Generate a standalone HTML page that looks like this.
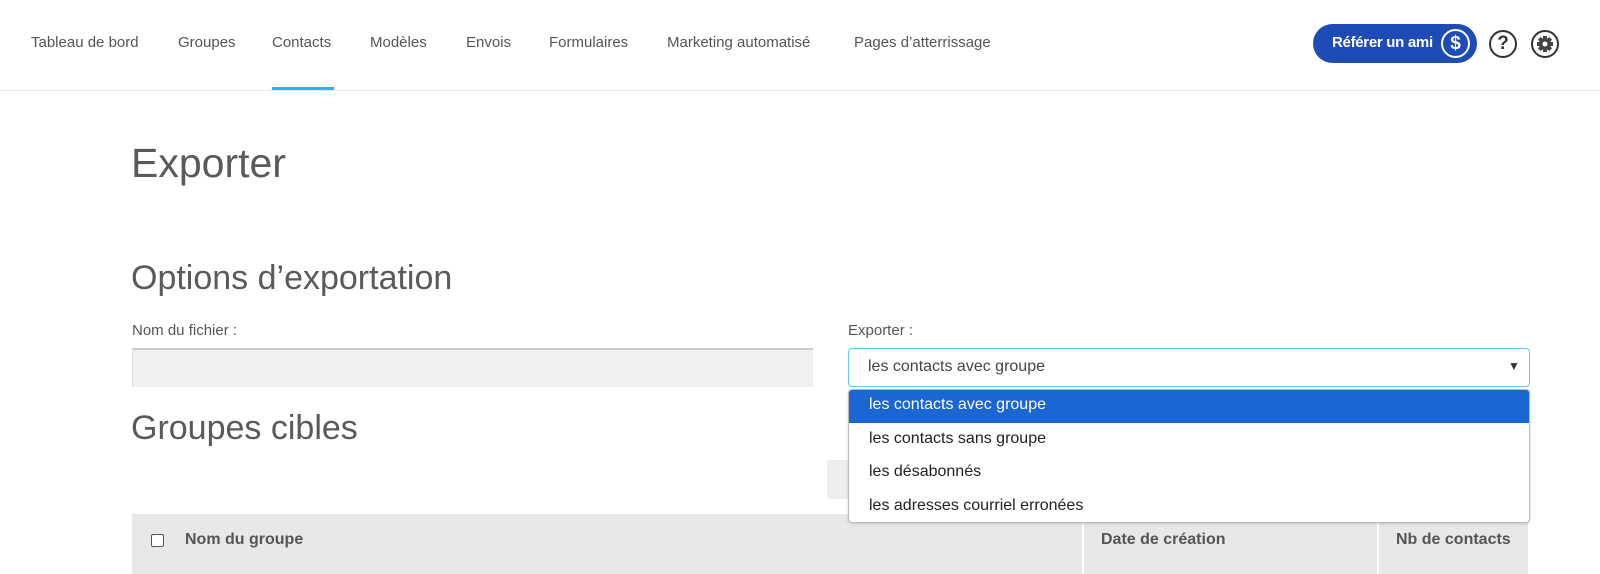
<!DOCTYPE html>
<html><head><meta charset="utf-8"><style>
*{margin:0;padding:0;box-sizing:border-box}
body{width:1600px;height:574px;overflow:hidden;background:#fff;font-family:"Liberation Sans",Arial,sans-serif;color:#555;position:relative}
.a{position:absolute;white-space:nowrap}
.nav{font-size:15px;color:#555;top:34px}
</style></head><body>
<div class="a" style="left:0;top:90px;width:1600px;height:1px;background:#e6e6e6"></div>
<div class="a nav" style="left:31px">Tableau de bord</div>
<div class="a nav" style="left:178px">Groupes</div>
<div class="a nav" style="left:272px">Contacts</div>
<div class="a nav" style="left:370px">Modèles</div>
<div class="a nav" style="left:466px">Envois</div>
<div class="a nav" style="left:549px">Formulaires</div>
<div class="a nav" style="left:667px">Marketing automatisé</div>
<div class="a nav" style="left:854px">Pages d’atterrissage</div>
<div class="a" style="left:272px;top:87px;width:62px;height:3px;background:#1bbde0"></div>

<div class="a" style="left:1313px;top:24px;width:164px;height:39px;border-radius:20px;background:#1e4bb5"></div>
<div class="a" style="left:1332px;top:34px;font-size:15px;font-weight:bold;color:#fff;letter-spacing:-0.3px">Référer un ami</div>
<div class="a" style="left:1441px;top:29px;width:29px;height:29px;border:2px solid #fff;border-radius:50%;color:#fff;font-weight:bold;font-size:19px;text-align:center;line-height:25px">$</div>
<div class="a" style="left:1489px;top:30px;width:28px;height:28px;border:2px solid #333;border-radius:50%;color:#333;font-weight:bold;font-size:19px;text-align:center;line-height:24px">?</div>
<div class="a" style="left:1531px;top:30px;width:28px;height:28px;border:2px solid #333;border-radius:50%"></div>
<svg class="a" style="left:1535px;top:34px" width="20" height="20" viewBox="0 0 20 20"><g fill="#444"><circle cx="10" cy="10" r="6"/><rect x="8" y="2" width="4" height="16"/><rect x="2" y="8" width="16" height="4"/><rect x="8" y="2" width="4" height="16" transform="rotate(45 10 10)"/><rect x="8" y="2" width="4" height="16" transform="rotate(-45 10 10)"/></g><circle cx="10" cy="10" r="2.5" fill="#fff"/></svg>

<div class="a" style="left:131px;top:140px;font-size:41px;font-weight:300;color:#5a5a5a">Exporter</div>
<div class="a" style="left:131px;top:259px;font-size:34px;color:#5a5a5a">Options d’exportation</div>
<div class="a" style="left:132px;top:322px;font-size:15px">Nom du fichier :</div>
<div class="a" style="left:848px;top:322px;font-size:15px">Exporter :</div>
<div class="a" style="left:132px;top:348px;width:681px;height:39px;background:#f0f0f0;border-top:2px solid #ccc;border-left:1px solid #ddd"></div>
<div class="a" style="left:848px;top:348px;width:682px;height:39px;border:1px solid #66c9e6;border-radius:4px;background:#fff"></div>
<div class="a" style="left:868px;top:358px;font-size:16px;color:#444">les contacts avec groupe</div>
<div class="a" style="left:1508px;top:359px;font-size:12px;color:#333">▼</div>
<div class="a" style="left:131px;top:409px;font-size:34px;color:#5a5a5a">Groupes cibles</div>
<div class="a" style="left:827px;top:460px;width:40px;height:39px;background:#eee;border-radius:3px"></div>
<div class="a" style="left:1527px;top:462px;width:3px;height:38px;background:#1e6fb8"></div>

<div class="a" style="left:132px;top:514px;width:1396px;height:60px;background:#e8e8e8"></div>
<div class="a" style="left:1082px;top:514px;width:2px;height:60px;background:#fff"></div>
<div class="a" style="left:1377px;top:514px;width:2px;height:60px;background:#fff"></div>
<div class="a" style="left:151px;top:534px;width:13px;height:13px;border:1.5px solid #555;border-radius:2px;background:#fff"></div>
<div class="a" style="left:185px;top:531px;font-size:16px;font-weight:bold;color:#555">Nom du groupe</div>
<div class="a" style="left:1101px;top:531px;font-size:16px;font-weight:bold;color:#555">Date de création</div>
<div class="a" style="left:1396px;top:531px;font-size:16px;font-weight:bold;color:#555">Nb de contacts</div>

<div class="a" style="left:848px;top:389px;width:682px;height:134px;background:#fff;border:1px solid #bbb;border-radius:4px;overflow:hidden;box-shadow:0 1px 3px rgba(0,0,0,.15)">
<div style="height:33px;background:#1a66d2;color:#fff;font-size:16px;padding:6px 0 0 20px">les contacts avec groupe</div>
<div style="height:33px;color:#222;font-size:16px;padding:7px 0 0 20px">les contacts sans groupe</div>
<div style="height:34px;color:#222;font-size:16px;padding:7px 0 0 20px">les désabonnés</div>
<div style="height:33px;color:#222;font-size:16px;padding:7px 0 0 20px">les adresses courriel erronées</div>
</div>
</body></html>
